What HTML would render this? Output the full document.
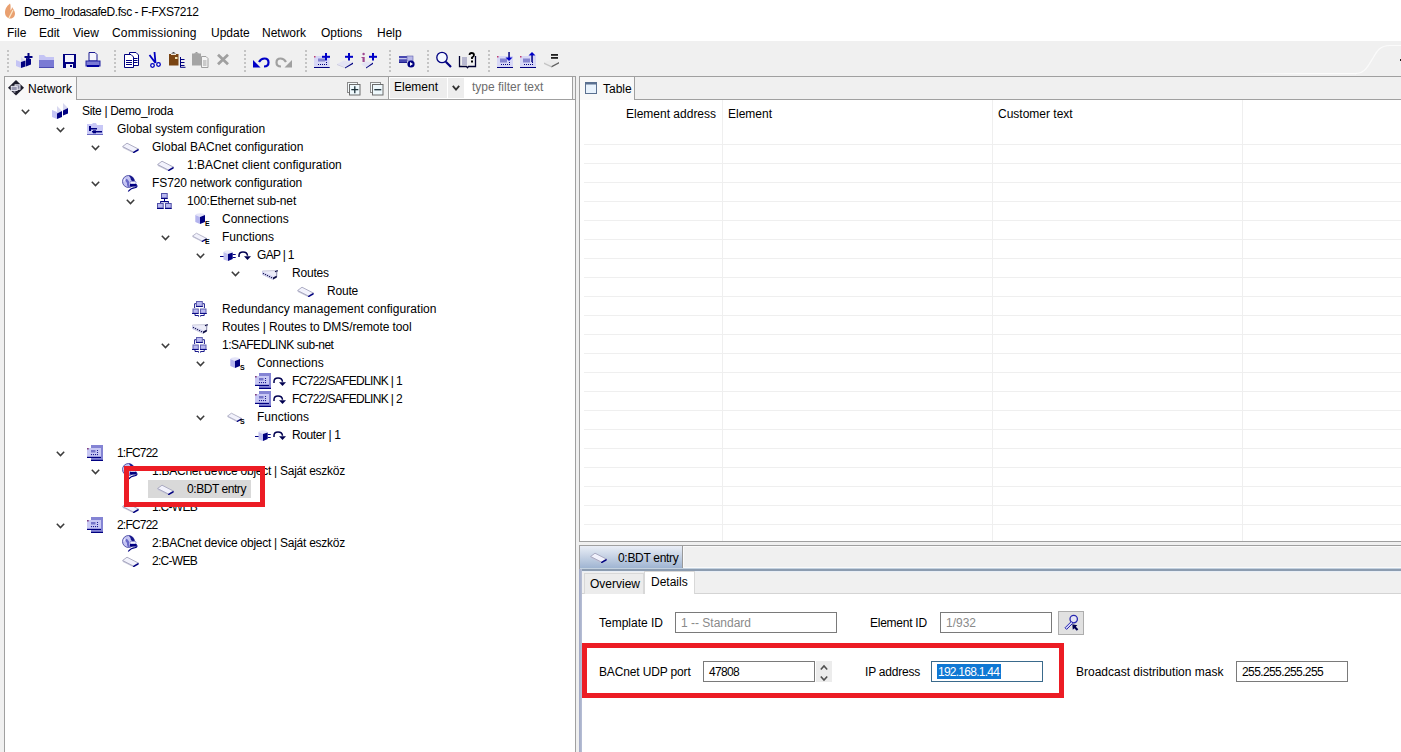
<!DOCTYPE html>
<html><head><meta charset="utf-8">
<style>
*{margin:0;padding:0;box-sizing:border-box}
html,body{width:1401px;height:752px;overflow:hidden;background:#fff;font-family:"Liberation Sans",sans-serif;font-size:12px;color:#000}
.a{position:absolute}
.t{position:absolute;white-space:nowrap;line-height:18px;height:18px}
svg.i{position:absolute;overflow:visible}
</style></head><body>

<svg width="0" height="0" style="position:absolute">
<defs>
<symbol id="chev" viewBox="0 0 9 6"><path d="M0.8 0.8 L4.5 4.6 L8.2 0.8" fill="none" stroke="#3c3c3c" stroke-width="1.5"/></symbol>
<symbol id="site" viewBox="0 0 18 18">
 <path d="M2 9 L7 11 L7 18 L2 16Z" fill="#c4c4f4"/>
 <path d="M7 5 L12 10 L7 12.5Z" fill="#d8d8f0"/>
 <path d="M7 12.5 L12 10 L12 16 L7 18Z" fill="#000080"/>
 <path d="M13 2 L18 7 L13 9.5Z" fill="#d8d8f0"/>
 <path d="M13 9.5 L18 7 L18 12.5 L13 14.5Z" fill="#000080"/>
</symbol>
<symbol id="folder" viewBox="0 0 16 12">
 <path d="M0 1 L5 1 L6 0 L9 0 L10 2 L16 2 L16 12 L0 12Z" fill="#c8c8f6"/>
 <rect x="0" y="11" width="16" height="1" fill="#6666c0"/>
 <rect x="2" y="3" width="2" height="5" fill="#000080"/>
 <rect x="2" y="5" width="8" height="1.5" fill="#000080"/>
 <rect x="5" y="8" width="10" height="1.5" fill="#000080"/>
 <rect x="6" y="7.3" width="3" height="3" fill="#000080"/>
</symbol>
<symbol id="slab" viewBox="0 0 17 11">
 <path d="M0.6 4.6 L0.9 5.9 L11.5 11.2 L11.5 10Z" fill="#c4c4d8"/>
 <path d="M0.6 4.5 L5 1.2 L16.3 7 L11.5 10.1 Z" fill="#f2f2fc" stroke="#a4a4bc" stroke-width="0.9"/>
 <path d="M11 10.1 L16.6 6.8 L16.6 8.6 L11.3 11.5Z" fill="#000080"/>
</symbol>
<symbol id="globe" viewBox="0 0 17 18">
 <circle cx="6.5" cy="6.5" r="6" fill="#c4c4f2" stroke="#4a4aa0" stroke-width="0.9"/>
 <path d="M6.5 0.5 A6 6 0 0 1 12.5 6.5 L10.5 6.5 Q8.5 5 8.5 3 Q8 1.5 6.5 0.5Z" fill="#16168c"/>
 <path d="M3.5 3.5 Q6 4 7 6.5 Q6.5 9 8 11.5 L6 12.3 Q4.5 10 5 8 Q3 6.5 3.5 3.5Z" fill="#6a6ac8"/>
 <path d="M1.5 5 Q2.5 3 4 3.5 Q3 5 2 7Z" fill="#eeeeff"/>
 <rect x="8" y="6.3" width="6" height="2.8" rx="1.2" fill="#f4f4ff" stroke="#5050b0" stroke-width="0.6"/>
 <rect x="8" y="9" width="6.5" height="2.6" fill="#000080"/>
 <path d="M14.3 9.5 Q16.2 12 13 12.6 Q9 13 6.2 16.5" fill="none" stroke="#000080" stroke-width="1.1"/>
</symbol>
<symbol id="nettree" viewBox="0 0 15 16">
 <rect x="4.5" y="0.5" width="5.7" height="4.5" fill="#b8b8f0" stroke="#5050a8" stroke-width="1"/>
 <rect x="4" y="5" width="6.7" height="1" fill="#000080"/>
 <rect x="7" y="6" width="1" height="2.5" fill="#000080"/>
 <rect x="3.2" y="8" width="8.6" height="1.2" fill="#000080"/>
 <rect x="3.2" y="9" width="0.9" height="1.2" fill="#000080"/>
 <rect x="10.9" y="9" width="0.9" height="1.2" fill="#000080"/>
 <rect x="0.5" y="10.5" width="5.7" height="4.5" fill="#b8b8f0" stroke="#5050a8" stroke-width="1"/>
 <rect x="8.5" y="10.5" width="5.7" height="4.5" fill="#b8b8f0" stroke="#5050a8" stroke-width="1"/>
 <rect x="0" y="15" width="6.7" height="1" fill="#000080"/>
 <rect x="8" y="15" width="6.7" height="1" fill="#000080"/>
</symbol>
<symbol id="cube" viewBox="0 0 11 11">
 <path d="M0.3 2 Q1 0.3 5 0.3 Q9.5 0.3 10 2 L5 4 Z" fill="#e4e4f8"/>
 <path d="M0.3 2 L5 4 L5 11 L0.3 9Z" fill="#b4b4ee"/>
 <path d="M5 4 L10 2 L10 9 L5 11Z" fill="#000080"/>
</symbol>
<symbol id="redund" viewBox="0 0 17 17">
 <rect x="6.5" y="1.5" width="5.8" height="4.8" fill="#b8b8f0" stroke="#6060b0" stroke-width="1"/>
 <rect x="6" y="6" width="6.8" height="0.9" fill="#000080"/>
 <path d="M6 3.7 L4.6 3.7 L4.6 8 M12.8 3.7 L14.4 3.7 L14.4 8" fill="none" stroke="#000080" stroke-width="0.9"/>
 <rect x="3" y="9" width="5.3" height="4.3" fill="#b8b8f0" stroke="#6060b0" stroke-width="1"/>
 <rect x="10.5" y="9" width="5.5" height="4.3" fill="#b8b8f0" stroke="#6060b0" stroke-width="1"/>
 <rect x="2" y="13" width="6.6" height="0.9" fill="#000080"/>
 <rect x="10" y="13" width="6.8" height="0.9" fill="#000080"/>
 <path d="M5 13.8 L5 15.5 L8.5 15.5 L8.5 16.6 M14.2 13.8 L14.2 15.5 L10.6 15.5 L10.6 16.6" fill="none" stroke="#000080" stroke-width="0.9"/>
</symbol>
<symbol id="routes" viewBox="0 0 16 10">
 <path d="M0.4 1 L15.3 0.5 L14.8 7 L11 9.5 L0.4 4.5Z" fill="#ececf8" stroke="#c0c0d4" stroke-width="0.8"/>
 <path d="M0 1.5 L11 6.3 L11 9.6 L0 4.5Z" fill="#d0d0f0"/>
 <circle cx="1.5" cy="3.6" r="0.7" fill="#0a0a40"/><circle cx="3.5" cy="4.6" r="0.7" fill="#0a0a40"/><circle cx="5.5" cy="5.6" r="0.7" fill="#0a0a40"/><circle cx="7.5" cy="6.6" r="0.7" fill="#0a0a40"/><circle cx="9.5" cy="7.6" r="0.7" fill="#0a0a40"/>
 <path d="M11 7.6 L14.8 5.6 L14.8 7.6 L11 9.6Z" fill="#0a0a40"/>
 <path d="M12.8 1.3 L15.8 0 L15.6 1.5 L13.2 2.2Z" fill="#0a0a40"/>
 <rect x="14.2" y="1.5" width="0.8" height="4.5" fill="#9090b0"/>
</symbol>
<symbol id="panel" viewBox="0 0 16 16">
 <rect x="4" y="0" width="12" height="15" fill="#8484d4"/>
 <rect x="4" y="14.8" width="12" height="1.2" fill="#000080"/>
 <rect x="0" y="3" width="14" height="9" fill="#c8c8f4"/>
 <rect x="0" y="11.8" width="14" height="1.2" fill="#000080"/>
 <rect x="0" y="3" width="1.7" height="1.5" fill="#804080"/>
 <rect x="4" y="5" width="4.5" height="2.5" fill="#7474c8"/>
 <circle cx="10.5" cy="5.5" r="0.6" fill="#000080"/><circle cx="10.5" cy="7.5" r="0.6" fill="#000080"/>
 <circle cx="4.5" cy="9.6" r="0.6" fill="#000080"/><circle cx="6.5" cy="9.6" r="0.6" fill="#000080"/><circle cx="8.5" cy="9.6" r="0.6" fill="#000080"/><circle cx="10.5" cy="9.6" r="0.6" fill="#000080"/>
</symbol>
<symbol id="arrow" viewBox="0 0 13 9">
 <path d="M1 6 L1 4.5 Q1 1 5 1 Q9.2 1 9.5 4.8" fill="none" stroke="#000050" stroke-width="1.5"/>
 <path d="M6 5.2 L13 5.2 L9.5 9Z" fill="#000050"/>
</symbol>
<symbol id="plug" viewBox="0 0 18 18">
 <rect x="2" y="10" width="5" height="1" fill="#000080"/>
 <path d="M5.5 6 Q6 4.3 10 4.3 Q14 4.3 14.7 6.5 L10 8 Z" fill="#eaeaf8"/>
 <path d="M5.5 6 L10 8 L10 15 L5.5 13.5Z" fill="#c0c0f0"/>
 <path d="M10 8 L14.7 6.5 L14.7 13 L10 15Z" fill="#000080"/>
 <rect x="14.7" y="8" width="3" height="1" fill="#000080"/>
 <rect x="14.7" y="11" width="3" height="1" fill="#000080"/>
</symbol>
<symbol id="netdiamond" viewBox="0 0 16 16">
 <path d="M8 0 L16 7.8 L8 15.6 L0 7.8Z" fill="#1c1c2a"/>
 <rect x="7" y="4.8" width="5" height="4.5" fill="#8888a0" stroke="#f0f0f8" stroke-width="0.9"/>
 <rect x="3.2" y="6.3" width="6" height="4.2" fill="#9898b0" stroke="#f0f0f8" stroke-width="0.9"/>
 <rect x="5.5" y="11.3" width="2" height="1.2" fill="#c0c0d0"/>
</symbol>
</defs></svg>

<div class="a" style="left:0px;top:0px;width:1401px;height:41px;background:#fff"></div>
<svg class="i" style="left:4px;top:3px" width="12" height="16" viewBox="0 0 12 16">
<path d="M6 0.5 C4 2 1 5 1 9.5 C1 13 3.5 15.5 6.5 15.5 C9.5 15.5 11 13 11 10.5 C11 8 9 6 8 4 C8 6 7 7 6.5 7.5 C6.5 5 7 2.5 6 0.5Z" fill="#e9a070"/>
<path d="M5 15 L9 7" stroke="#fbe8c8" stroke-width="1.3"/>
</svg>
<div class="t" style="left:24px;top:3px;letter-spacing:-0.44px">Demo_IrodasafeD.fsc - F-FXS7212</div>
<div class="t" style="left:7px;top:24px;">File</div>
<div class="t" style="left:39px;top:24px;">Edit</div>
<div class="t" style="left:73px;top:24px;">View</div>
<div class="t" style="left:112px;top:24px;letter-spacing:0.2px">Commissioning</div>
<div class="t" style="left:211px;top:24px;">Update</div>
<div class="t" style="left:262px;top:24px;">Network</div>
<div class="t" style="left:321px;top:24px;">Options</div>
<div class="t" style="left:377px;top:24px;">Help</div>
<div class="a" style="left:0px;top:41px;width:1401px;height:711px;background:#f0f0f0"></div>
<div class="a" style="left:7px;top:50px;width:2px;height:2px;background:#c4c4c4"></div>
<div class="a" style="left:7px;top:54px;width:2px;height:2px;background:#c4c4c4"></div>
<div class="a" style="left:7px;top:58px;width:2px;height:2px;background:#c4c4c4"></div>
<div class="a" style="left:7px;top:62px;width:2px;height:2px;background:#c4c4c4"></div>
<div class="a" style="left:7px;top:66px;width:2px;height:2px;background:#c4c4c4"></div>
<div class="a" style="left:7px;top:70px;width:2px;height:2px;background:#c4c4c4"></div>
<div class="a" style="left:114px;top:50px;width:2px;height:2px;background:#c4c4c4"></div>
<div class="a" style="left:114px;top:54px;width:2px;height:2px;background:#c4c4c4"></div>
<div class="a" style="left:114px;top:58px;width:2px;height:2px;background:#c4c4c4"></div>
<div class="a" style="left:114px;top:62px;width:2px;height:2px;background:#c4c4c4"></div>
<div class="a" style="left:114px;top:66px;width:2px;height:2px;background:#c4c4c4"></div>
<div class="a" style="left:114px;top:70px;width:2px;height:2px;background:#c4c4c4"></div>
<div class="a" style="left:244px;top:50px;width:2px;height:2px;background:#c4c4c4"></div>
<div class="a" style="left:244px;top:54px;width:2px;height:2px;background:#c4c4c4"></div>
<div class="a" style="left:244px;top:58px;width:2px;height:2px;background:#c4c4c4"></div>
<div class="a" style="left:244px;top:62px;width:2px;height:2px;background:#c4c4c4"></div>
<div class="a" style="left:244px;top:66px;width:2px;height:2px;background:#c4c4c4"></div>
<div class="a" style="left:244px;top:70px;width:2px;height:2px;background:#c4c4c4"></div>
<div class="a" style="left:305px;top:50px;width:2px;height:2px;background:#c4c4c4"></div>
<div class="a" style="left:305px;top:54px;width:2px;height:2px;background:#c4c4c4"></div>
<div class="a" style="left:305px;top:58px;width:2px;height:2px;background:#c4c4c4"></div>
<div class="a" style="left:305px;top:62px;width:2px;height:2px;background:#c4c4c4"></div>
<div class="a" style="left:305px;top:66px;width:2px;height:2px;background:#c4c4c4"></div>
<div class="a" style="left:305px;top:70px;width:2px;height:2px;background:#c4c4c4"></div>
<div class="a" style="left:389px;top:50px;width:2px;height:2px;background:#c4c4c4"></div>
<div class="a" style="left:389px;top:54px;width:2px;height:2px;background:#c4c4c4"></div>
<div class="a" style="left:389px;top:58px;width:2px;height:2px;background:#c4c4c4"></div>
<div class="a" style="left:389px;top:62px;width:2px;height:2px;background:#c4c4c4"></div>
<div class="a" style="left:389px;top:66px;width:2px;height:2px;background:#c4c4c4"></div>
<div class="a" style="left:389px;top:70px;width:2px;height:2px;background:#c4c4c4"></div>
<div class="a" style="left:427px;top:50px;width:2px;height:2px;background:#c4c4c4"></div>
<div class="a" style="left:427px;top:54px;width:2px;height:2px;background:#c4c4c4"></div>
<div class="a" style="left:427px;top:58px;width:2px;height:2px;background:#c4c4c4"></div>
<div class="a" style="left:427px;top:62px;width:2px;height:2px;background:#c4c4c4"></div>
<div class="a" style="left:427px;top:66px;width:2px;height:2px;background:#c4c4c4"></div>
<div class="a" style="left:427px;top:70px;width:2px;height:2px;background:#c4c4c4"></div>
<div class="a" style="left:488px;top:50px;width:2px;height:2px;background:#c4c4c4"></div>
<div class="a" style="left:488px;top:54px;width:2px;height:2px;background:#c4c4c4"></div>
<div class="a" style="left:488px;top:58px;width:2px;height:2px;background:#c4c4c4"></div>
<div class="a" style="left:488px;top:62px;width:2px;height:2px;background:#c4c4c4"></div>
<div class="a" style="left:488px;top:66px;width:2px;height:2px;background:#c4c4c4"></div>
<div class="a" style="left:488px;top:70px;width:2px;height:2px;background:#c4c4c4"></div>
<svg class="i" style="left:14px;top:50px" width="20" height="20" viewBox="0 0 20 20"><path d="M2 10 L7 12 L7 18 L2 16Z" fill="#c4c4f4"/><path d="M7 7 L11 10.5 L7 12Z" fill="#d8d8f0"/><path d="M7 12 L11.5 10.5 L11.5 16.5 L7 18Z" fill="#000080"/><path d="M12 8 L17 9 L17 14.5 L12 16.5Z" fill="#000080"/><rect x="13.5" y="3" width="2" height="8" fill="#000080"/><rect x="10.5" y="6" width="8" height="2" fill="#000080"/></svg>
<svg class="i" style="left:39px;top:55px" width="15" height="13" viewBox="0 0 15 13"><path d="M0 0 L5 0 L7 2 L15 2 L15 13 L0 13Z" fill="#c4c4f4"/><rect x="0" y="5" width="15" height="8" fill="#7a7ad4"/><rect x="0" y="12" width="15" height="1" fill="#4a4ab0"/></svg>
<svg class="i" style="left:63px;top:54px" width="13" height="14" viewBox="0 0 13 14"><rect x="0" y="0" width="13" height="14" fill="#000080"/><rect x="2" y="1" width="9" height="7" fill="#f4f4fc"/><rect x="3" y="10" width="7" height="4" fill="#f4f4fc"/><rect x="7" y="11" width="2" height="2" fill="#000080"/></svg>
<svg class="i" style="left:86px;top:52px" width="14" height="16" viewBox="0 0 14 16"><path d="M3 0.5 L9 0.5 L11 2.5 L11 9 L3 9Z" fill="#f4f4fc" stroke="#1a1a90" stroke-width="1"/><rect x="0" y="9" width="14" height="5" fill="#7a7ad4" stroke="#2020a0" stroke-width="1"/><rect x="1" y="13" width="12" height="2" fill="#0000a0"/></svg>
<svg class="i" style="left:120px;top:48px" width="20" height="22" viewBox="0 0 20 22"><path d="M9.5 4.5 L16 4.5 L18.5 7 L18.5 17.5 L9.5 17.5Z" fill="#fff" stroke="#000080" stroke-width="1"/><path d="M4.5 6.5 L11 6.5 L13.5 9 L13.5 19.5 L4.5 19.5Z" fill="#fff" stroke="#000080" stroke-width="1"/><path d="M6 12.5 h6 M6 14.5 h6 M6 16.5 h6 M14 10.5 h3.5 M14 12.5 h3.5 M14 14.5 h3.5" stroke="#000080" stroke-width="1"/></svg>
<svg class="i" style="left:140px;top:48px" width="20" height="22" viewBox="0 0 20 22"><path d="M9.5 7 L15.5 15 M14.5 4 L15.5 15" stroke="#0000c0" stroke-width="1.8"/><circle cx="12.5" cy="17.5" r="1.8" fill="#fff" stroke="#0000c0" stroke-width="1.3"/><circle cx="18.5" cy="16.5" r="1.8" fill="#fff" stroke="#0000c0" stroke-width="1.3"/></svg>
<svg class="i" style="left:160px;top:48px" width="20" height="22" viewBox="0 0 20 22"><rect x="9" y="6" width="9.5" height="11.5" fill="#7a4412"/><path d="M11 5.5 L16 5.5 L13.5 4 Z" fill="#303030"/><rect x="11" y="6" width="5" height="1" fill="#f4e8d8"/><rect x="15" y="9" width="2.5" height="2" fill="#f0e0b0"/><rect x="0" y="0" width="0" height="0"/></svg>
<svg class="i" style="left:180px;top:48px" width="8" height="22" viewBox="0 0 8 22"><path d="M0.5 9 L0.5 19.5 M0.5 11.5 h4 M0.5 14.5 h4 M0.5 17.5 h4 M0.5 19.3 h5" stroke="#000080" stroke-width="1"/></svg>
<svg class="i" style="left:188px;top:48px" width="22" height="22" viewBox="0 0 22 22"><rect x="4" y="5.5" width="9" height="12" fill="#a4a4a4"/><path d="M6 5.5 L11 5.5 L8.5 4Z" fill="#8a8a8a"/><path d="M13.5 8.5 L18 8.5 L20 10.5 L20 19.5 L13.5 19.5Z" fill="#f4f4f4" stroke="#a0a0a0" stroke-width="1"/><path d="M15 13 h3.5 M15 15 h3.5 M15 17 h3.5" stroke="#a0a0a0" stroke-width="1"/></svg>
<svg class="i" style="left:216px;top:53px" width="14" height="13" viewBox="0 0 14 13"><path d="M2 1.8 L12 11.2 M12 1.8 L2 11.2" stroke="#a0a0a0" stroke-width="2.8"/></svg>
<svg class="i" style="left:251px;top:56px" width="20" height="13" viewBox="0 0 20 13"><path d="M8 6 Q10 2.5 13.5 2.5 Q17.5 2.5 17.5 6.5 Q17.5 10.5 13 10.5" fill="none" stroke="#0000c8" stroke-width="2.2"/><path d="M2 4 L2 11.5 L9.5 11.5Z" fill="#0000c8"/></svg>
<svg class="i" style="left:274px;top:56px" width="20" height="13" viewBox="0 0 20 13"><path d="M12 6 Q10 2.5 6.5 2.5 Q2.5 2.5 2.5 6.5 Q2.5 10.5 7 10.5" fill="none" stroke="#a0a0a0" stroke-width="2.2"/><path d="M18 4 L18 11.5 L10.5 11.5Z" fill="#a0a0a0"/></svg>
<svg class="i" style="left:310px;top:48px" width="22" height="22" viewBox="0 0 22 22"><rect x="4" y="8" width="15.5" height="11" fill="#d8d8f6"/><rect x="8" y="10.5" width="7" height="3" fill="#8484d0"/><path d="M8 16.5 h1 M10 16.5 h1 M12 16.5 h1 M14 16.5 h1 M16 16.5 h1 M16.5 14 v1" stroke="#000080" stroke-width="1"/><rect x="4" y="19" width="15.7" height="1" fill="#000080"/><rect x="4" y="8" width="1.5" height="1.5" fill="#c04070"/><rect x="15" y="5" width="2" height="7.5" fill="#0000c8"/><rect x="12" y="7.8" width="8" height="2" fill="#0000c8"/></svg>
<svg class="i" style="left:333px;top:48px" width="22" height="22" viewBox="0 0 22 22"><path d="M4 16 L11 12.5 L20 14.5 L12 19.5Z" fill="#e4e4f4"/><path d="M4 16 L12 19.5 L12 20 L4 17Z" fill="#c8c8dc"/><path d="M12 19.5 L20 14.5 L20 16 L12 20.5Z" fill="#000080"/><rect x="15" y="5" width="2" height="7.5" fill="#0000c8"/><rect x="12" y="7.8" width="8" height="2" fill="#0000c8"/></svg>
<svg class="i" style="left:357px;top:48px" width="22" height="22" viewBox="0 0 22 22"><path d="M4 16 L9 13.5 L16 14.5 L9 19.5Z" fill="#e4e4f4"/><path d="M9 19.5 L16 14.5 L16 16 L9 20.5Z" fill="#000080"/><rect x="5.5" y="9" width="2.2" height="5" fill="#a04890"/><circle cx="6.6" cy="6" r="1.2" fill="#a04890"/><rect x="4.5" y="9" width="2" height="1" fill="#a04890"/><rect x="15" y="5" width="2" height="7.5" fill="#0000c8"/><rect x="12" y="7.8" width="8" height="2" fill="#0000c8"/></svg>
<svg class="i" style="left:397px;top:48px" width="20" height="22" viewBox="0 0 20 22"><rect x="2" y="8" width="8" height="6.5" fill="#4848b0"/><rect x="2" y="10" width="8" height="1.3" fill="#c8c8f0"/><rect x="10" y="8" width="6" height="5" fill="#b8b8e8" stroke="#6060b0" stroke-width="0.6"/><circle cx="14" cy="16" r="3.6" fill="#000080"/><path d="M13 14 L16 16 L13 18Z" fill="#fff"/><rect x="2" y="14" width="8" height="0.8" fill="#000080"/></svg>
<svg class="i" style="left:430px;top:48px" width="22" height="22" viewBox="0 0 22 22"><circle cx="12" cy="9.5" r="5.2" fill="#f4f8ff" stroke="#000080" stroke-width="1.3"/><path d="M15.8 13.8 L21 19" stroke="#000080" stroke-width="2.2"/></svg>
<svg class="i" style="left:457px;top:48px" width="20" height="22" viewBox="0 0 20 22"><path d="M2.5 8 L2.5 18.5 L9.5 18.5 L10.5 19.8 L11.5 18.5 L18.5 18.5 L18.5 8" fill="none" stroke="#000030" stroke-width="1.3"/><path d="M5 10 h5 M5 12 h5 M5 14 h5 M5 16 h5" stroke="#8080b0" stroke-width="1"/><path d="M12.5 7 Q12.5 5 14.5 5 Q17 5 17 7 Q17 8.5 15 9.5 L15 11" fill="none" stroke="#000000" stroke-width="1.8"/><rect x="14" y="12.5" width="2" height="2" fill="#000"/></svg>
<svg class="i" style="left:493px;top:48px" width="22" height="22" viewBox="0 0 22 22"><rect x="4" y="8" width="16" height="11" fill="#d8d8f6"/><rect x="7" y="10.5" width="7" height="4" fill="#8484d0"/><path d="M8 16.5 h1 M10 16.5 h1 M12 16.5 h1 M14 16.5 h1 M16 16.5 h1 M16.5 14 v1" stroke="#000080" stroke-width="1"/><rect x="4" y="19" width="16" height="1" fill="#000080"/><rect x="4" y="8" width="1.5" height="1.5" fill="#c04070"/><rect x="15.3" y="4" width="1.5" height="6" fill="#000080"/><path d="M12.5 9.5 L19.5 9.5 L16 13Z" fill="#0000c8"/></svg>
<svg class="i" style="left:516px;top:48px" width="22" height="22" viewBox="0 0 22 22"><rect x="4" y="8" width="16" height="11" fill="#d8d8f6"/><rect x="7" y="10.5" width="7" height="4" fill="#8484d0"/><path d="M8 16.5 h1 M10 16.5 h1 M12 16.5 h1 M14 16.5 h1 M16 16.5 h1 M16.5 14 v1" stroke="#000080" stroke-width="1"/><rect x="4" y="19" width="16" height="1" fill="#000080"/><rect x="4" y="8" width="1.5" height="1.5" fill="#c04070"/><rect x="15.3" y="7" width="1.5" height="7" fill="#000080"/><path d="M12.5 7.5 L19.5 7.5 L16 4Z" fill="#0000c8"/></svg>
<svg class="i" style="left:540px;top:48px" width="22" height="22" viewBox="0 0 22 22"><path d="M4 14.5 L12 11.5 L19 14 L11.5 18Z" fill="#ececec"/><path d="M4 14.5 L11.5 18 L11.5 19.5 L4 16Z" fill="#c4c4c4"/><path d="M11.5 18 L19 14 L19 15.5 L11.5 19.5Z" fill="#606060"/><rect x="11" y="6" width="7" height="1.8" fill="#202020"/><rect x="11" y="9" width="7" height="1.8" fill="#202020"/></svg>
<svg class="i" style="left:1240px;top:44px" width="161" height="32" viewBox="0 0 161 32"><defs><linearGradient id="fl" x1="0" x2="1"><stop offset="0" stop-color="#fbfbfb" stop-opacity="0"/><stop offset="0.5" stop-color="#fbfbfb" stop-opacity="1"/></linearGradient></defs><rect x="0" y="29" width="116" height="1.2" fill="url(#fl)"/><path d="M115 29.6 C125 29.6 128 22 133 14 C137 7 140 1.5 150 1.5 L161 1.5" fill="none" stroke="#fbfbfb" stroke-width="1.2"/></svg>
<div class="a" style="left:1400px;top:59px;width:1px;height:2px;background:#202020"></div>
<div class="a" style="left:4px;top:76px;width:572px;height:700px;border:1px solid #a0a0a0;background:#fff"></div>
<div class="a" style="left:5px;top:77px;width:570px;height:23px;background:#f0f0f0;border-bottom:1px solid #a0a0a0"></div>
<div class="a" style="left:4px;top:76px;width:73px;height:24px;background:#f8f8f8;border:1px solid #a0a0a0;border-bottom:none"></div>
<svg class="i" style="left:8px;top:80px" width="16" height="16"><use href="#netdiamond" width="16" height="16"/></svg>
<div class="t" style="left:28px;top:80px;">Network</div>
<svg class="i" style="left:346px;top:81px" width="16" height="16" viewBox="0 0 16 16"><rect x="1.5" y="1.5" width="10" height="10" fill="#f4fafc" stroke="#8c8c8c"/><rect x="3.5" y="3.5" width="10.5" height="10.5" fill="#eef8fc" stroke="#6c6c6c"/><path d="M5.3 8.7 h7 M8.8 5.3 v7" stroke="#1c3038" stroke-width="1.3"/></svg>
<svg class="i" style="left:369px;top:81px" width="16" height="16" viewBox="0 0 16 16"><rect x="1.5" y="1.5" width="10" height="10" fill="#f4fafc" stroke="#8c8c8c"/><rect x="3.5" y="3.5" width="10.5" height="10.5" fill="#eef8fc" stroke="#6c6c6c"/><path d="M5.3 8.7 h7" stroke="#1c3038" stroke-width="1.3"/></svg>
<div class="a" style="left:388px;top:76px;width:185px;height:24px;background:#fff;border:1px solid #a0a0a0"></div>
<div class="a" style="left:390px;top:78px;width:57px;height:20px;background:#ededed"></div>
<div class="a" style="left:448px;top:78px;width:16px;height:20px;background:#ededed"></div>
<div class="t" style="left:394px;top:78px;">Element</div>
<svg class="i" style="left:452px;top:85px" width="8" height="6" viewBox="0 0 8 6"><path d="M0.8 0.8 L4 4.6 L7.2 0.8" fill="none" stroke="#303030" stroke-width="1.8"/></svg>
<div class="t" style="left:472px;top:78px;color:#6d6d6d">type filter text</div>
<div class="a" style="left:148px;top:480px;width:103px;height:18px;background:#d9d9d9"></div>
<svg class="i" style="left:21px;top:109px" width="9" height="6"><use href="#chev" width="9" height="6"/></svg>
<svg class="i" style="left:50px;top:101px" width="18" height="18"><use href="#site" width="18" height="18"/></svg>
<div class="t" style="left:82px;top:102px;letter-spacing:-0.32px">Site | Demo_Iroda</div>
<svg class="i" style="left:56px;top:127px" width="9" height="6"><use href="#chev" width="9" height="6"/></svg>
<svg class="i" style="left:87px;top:123px" width="16" height="12"><use href="#folder" width="16" height="12"/></svg>
<div class="t" style="left:117px;top:120px;letter-spacing:0px">Global system configuration</div>
<svg class="i" style="left:91px;top:145px" width="9" height="6"><use href="#chev" width="9" height="6"/></svg>
<svg class="i" style="left:122px;top:142px" width="17" height="11"><use href="#slab" width="17" height="11"/></svg>
<div class="t" style="left:152px;top:138px;letter-spacing:0px">Global BACnet configuration</div>
<svg class="i" style="left:157px;top:160px" width="17" height="11"><use href="#slab" width="17" height="11"/></svg>
<div class="t" style="left:187px;top:156px;letter-spacing:0px">1:BACnet client configuration</div>
<svg class="i" style="left:91px;top:181px" width="9" height="6"><use href="#chev" width="9" height="6"/></svg>
<svg class="i" style="left:122px;top:175px" width="17" height="18"><use href="#globe" width="17" height="18"/></svg>
<div class="t" style="left:152px;top:174px;letter-spacing:-0.1px">FS720 network configuration</div>
<svg class="i" style="left:126px;top:199px" width="9" height="6"><use href="#chev" width="9" height="6"/></svg>
<svg class="i" style="left:157px;top:193px" width="15" height="16"><use href="#nettree" width="15" height="16"/></svg>
<div class="t" style="left:187px;top:192px;letter-spacing:-0.15px">100:Ethernet sub-net</div>
<svg class="i" style="left:195px;top:213px" width="11" height="11"><use href="#cube" width="11" height="11"/></svg>
<div class="t" style="left:205px;top:219px;font-size:7px;font-weight:bold;line-height:9px;height:9px;color:#000">E</div>
<div class="t" style="left:222px;top:210px;letter-spacing:0px">Connections</div>
<svg class="i" style="left:161px;top:235px" width="9" height="6"><use href="#chev" width="9" height="6"/></svg>
<svg class="i" style="left:192px;top:232px" width="15" height="10"><use href="#slab" width="15" height="10"/></svg>
<div class="t" style="left:205px;top:237px;font-size:7px;font-weight:bold;line-height:9px;height:9px;color:#000">E</div>
<div class="t" style="left:222px;top:228px;letter-spacing:0px">Functions</div>
<svg class="i" style="left:196px;top:253px" width="9" height="6"><use href="#chev" width="9" height="6"/></svg>
<svg class="i" style="left:218px;top:246px" width="18" height="18"><use href="#plug" width="18" height="18"/></svg>
<svg class="i" style="left:238px;top:251px" width="13" height="9"><use href="#arrow" width="13" height="9"/></svg>
<div class="t" style="left:257px;top:246px;letter-spacing:-0.7px">GAP | 1</div>
<svg class="i" style="left:231px;top:271px" width="9" height="6"><use href="#chev" width="9" height="6"/></svg>
<svg class="i" style="left:262px;top:270px" width="16" height="10"><use href="#routes" width="16" height="10"/></svg>
<div class="t" style="left:292px;top:264px;letter-spacing:-0.2px">Routes</div>
<svg class="i" style="left:297px;top:286px" width="17" height="11"><use href="#slab" width="17" height="11"/></svg>
<div class="t" style="left:327px;top:282px;letter-spacing:-0.2px">Route</div>
<svg class="i" style="left:190px;top:300px" width="17" height="17"><use href="#redund" width="17" height="17"/></svg>
<div class="t" style="left:222px;top:300px;letter-spacing:0.05px">Redundancy management configuration</div>
<svg class="i" style="left:192px;top:324px" width="16" height="10"><use href="#routes" width="16" height="10"/></svg>
<div class="t" style="left:222px;top:318px;letter-spacing:-0.09px">Routes | Routes to DMS/remote tool</div>
<svg class="i" style="left:161px;top:343px" width="9" height="6"><use href="#chev" width="9" height="6"/></svg>
<svg class="i" style="left:190px;top:336px" width="17" height="17"><use href="#redund" width="17" height="17"/></svg>
<div class="t" style="left:222px;top:336px;letter-spacing:-0.45px">1:SAFEDLINK sub-net</div>
<svg class="i" style="left:196px;top:361px" width="9" height="6"><use href="#chev" width="9" height="6"/></svg>
<svg class="i" style="left:230px;top:357px" width="11" height="11"><use href="#cube" width="11" height="11"/></svg>
<div class="t" style="left:240px;top:363px;font-size:7px;font-weight:bold;line-height:9px;height:9px;color:#000">S</div>
<div class="t" style="left:257px;top:354px;letter-spacing:0px">Connections</div>
<svg class="i" style="left:255px;top:373px" width="16" height="16"><use href="#panel" width="16" height="16"/></svg>
<svg class="i" style="left:273px;top:377px" width="13" height="9"><use href="#arrow" width="13" height="9"/></svg>
<div class="t" style="left:292px;top:372px;letter-spacing:-0.66px">FC722/SAFEDLINK | 1</div>
<svg class="i" style="left:255px;top:391px" width="16" height="16"><use href="#panel" width="16" height="16"/></svg>
<svg class="i" style="left:273px;top:395px" width="13" height="9"><use href="#arrow" width="13" height="9"/></svg>
<div class="t" style="left:292px;top:390px;letter-spacing:-0.66px">FC722/SAFEDLINK | 2</div>
<svg class="i" style="left:196px;top:415px" width="9" height="6"><use href="#chev" width="9" height="6"/></svg>
<svg class="i" style="left:227px;top:412px" width="15" height="10"><use href="#slab" width="15" height="10"/></svg>
<div class="t" style="left:240px;top:417px;font-size:7px;font-weight:bold;line-height:9px;height:9px;color:#000">S</div>
<div class="t" style="left:257px;top:408px;letter-spacing:0px">Functions</div>
<svg class="i" style="left:253px;top:426px" width="18" height="18"><use href="#plug" width="18" height="18"/></svg>
<svg class="i" style="left:273px;top:431px" width="13" height="9"><use href="#arrow" width="13" height="9"/></svg>
<div class="t" style="left:292px;top:426px;letter-spacing:-0.4px">Router | 1</div>
<svg class="i" style="left:56px;top:451px" width="9" height="6"><use href="#chev" width="9" height="6"/></svg>
<svg class="i" style="left:87px;top:445px" width="16" height="16"><use href="#panel" width="16" height="16"/></svg>
<div class="t" style="left:117px;top:444px;letter-spacing:-0.8px">1:FC722</div>
<svg class="i" style="left:91px;top:469px" width="9" height="6"><use href="#chev" width="9" height="6"/></svg>
<svg class="i" style="left:122px;top:463px" width="17" height="18"><use href="#globe" width="17" height="18"/></svg>
<div class="t" style="left:152px;top:462px;letter-spacing:-0.26px">1:BACnet device object | Saj&aacute;t eszk&ouml;z</div>
<svg class="i" style="left:157px;top:484px" width="17" height="11"><use href="#slab" width="17" height="11"/></svg>
<div class="t" style="left:187px;top:480px;letter-spacing:-0.44px">0:BDT entry</div>
<svg class="i" style="left:122px;top:502px" width="17" height="11"><use href="#slab" width="17" height="11"/></svg>
<div class="t" style="left:152px;top:498px;letter-spacing:-0.7px">1:C-WEB</div>
<svg class="i" style="left:56px;top:523px" width="9" height="6"><use href="#chev" width="9" height="6"/></svg>
<svg class="i" style="left:87px;top:517px" width="16" height="16"><use href="#panel" width="16" height="16"/></svg>
<div class="t" style="left:117px;top:516px;letter-spacing:-0.8px">2:FC722</div>
<svg class="i" style="left:122px;top:535px" width="17" height="18"><use href="#globe" width="17" height="18"/></svg>
<div class="t" style="left:152px;top:534px;letter-spacing:-0.26px">2:BACnet device object | Saj&aacute;t eszk&ouml;z</div>
<svg class="i" style="left:122px;top:556px" width="17" height="11"><use href="#slab" width="17" height="11"/></svg>
<div class="t" style="left:152px;top:552px;letter-spacing:-0.7px">2:C-WEB</div>
<div class="a" style="left:124px;top:466px;width:141px;height:41px;border:5px solid #ec1c24"></div>
<div class="a" style="left:579px;top:76px;width:830px;height:466px;border:1px solid #a0a0a0;background:#fff"></div>
<div class="a" style="left:580px;top:77px;width:830px;height:23px;background:#f0f0f0;border-bottom:1px solid #a0a0a0"></div>
<div class="a" style="left:579px;top:76px;width:56px;height:24px;background:#f8f8f8;border:1px solid #a0a0a0;border-bottom:none"></div>
<svg class="i" style="left:585px;top:82px" width="12" height="12" viewBox="0 0 12 12"><rect x="0.5" y="0.5" width="11" height="11" fill="#e8f2fc" stroke="#5a7090"/><rect x="0.5" y="0.5" width="11" height="2" fill="#5a7090"/></svg>
<div class="t" style="left:603px;top:80px;">Table</div>
<div class="a" style="left:584px;top:144px;width:817px;height:1px;background:#efefef"></div>
<div class="a" style="left:584px;top:163px;width:817px;height:1px;background:#efefef"></div>
<div class="a" style="left:584px;top:182px;width:817px;height:1px;background:#efefef"></div>
<div class="a" style="left:584px;top:201px;width:817px;height:1px;background:#efefef"></div>
<div class="a" style="left:584px;top:220px;width:817px;height:1px;background:#efefef"></div>
<div class="a" style="left:584px;top:239px;width:817px;height:1px;background:#efefef"></div>
<div class="a" style="left:584px;top:258px;width:817px;height:1px;background:#efefef"></div>
<div class="a" style="left:584px;top:277px;width:817px;height:1px;background:#efefef"></div>
<div class="a" style="left:584px;top:296px;width:817px;height:1px;background:#efefef"></div>
<div class="a" style="left:584px;top:315px;width:817px;height:1px;background:#efefef"></div>
<div class="a" style="left:584px;top:334px;width:817px;height:1px;background:#efefef"></div>
<div class="a" style="left:584px;top:353px;width:817px;height:1px;background:#efefef"></div>
<div class="a" style="left:584px;top:372px;width:817px;height:1px;background:#efefef"></div>
<div class="a" style="left:584px;top:391px;width:817px;height:1px;background:#efefef"></div>
<div class="a" style="left:584px;top:410px;width:817px;height:1px;background:#efefef"></div>
<div class="a" style="left:584px;top:429px;width:817px;height:1px;background:#efefef"></div>
<div class="a" style="left:584px;top:448px;width:817px;height:1px;background:#efefef"></div>
<div class="a" style="left:584px;top:467px;width:817px;height:1px;background:#efefef"></div>
<div class="a" style="left:584px;top:486px;width:817px;height:1px;background:#efefef"></div>
<div class="a" style="left:584px;top:505px;width:817px;height:1px;background:#efefef"></div>
<div class="a" style="left:584px;top:524px;width:817px;height:1px;background:#efefef"></div>
<div class="a" style="left:722px;top:100px;width:1px;height:441px;background:#efefef"></div>
<div class="a" style="left:992px;top:100px;width:1px;height:441px;background:#efefef"></div>
<div class="a" style="left:1242px;top:100px;width:1px;height:441px;background:#efefef"></div>
<div class="t" style="left:626px;top:105px;">Element address</div>
<div class="t" style="left:728px;top:105px;">Element</div>
<div class="t" style="left:998px;top:105px;">Customer text</div>
<div class="a" style="left:579px;top:545px;width:830px;height:210px;border:1px solid #a0a0a0;background:#fff"></div>
<div class="a" style="left:580px;top:546px;width:830px;height:22px;background:#f0f0f0"></div>
<div class="a" style="left:580px;top:546px;width:102px;height:23px;background:linear-gradient(#eaeef6,#9cb2d0)"></div>
<div class="a" style="left:682px;top:546px;width:1px;height:22px;background:#9a9a9a"></div>
<div class="a" style="left:683px;top:546px;width:718px;height:22px;background:#f0f0f0;border-left:1px solid #fafafa;border-bottom:1px solid #fafafa;border-top:1px solid #fafafa"></div>
<div class="a" style="left:580px;top:568px;width:830px;height:1px;background:#c4d2e0"></div>
<div class="a" style="left:580px;top:569px;width:830px;height:2px;background:#8c9cb0"></div>
<div class="a" style="left:582px;top:571px;width:830px;height:1px;background:#e8eef6"></div>
<div class="a" style="left:579px;top:569px;width:3px;height:190px;background:linear-gradient(90deg,#a0a8c4,#b8c0d6)"></div>
<div class="a" style="left:582px;top:572px;width:819px;height:22px;background:#f0f0f0;border-bottom:1px solid #d4d4d4"></div>
<div class="a" style="left:584px;top:573px;width:60px;height:21px;background:#ececec;border:1px solid #d8d8d8;border-bottom:none"></div>
<div class="a" style="left:644px;top:571px;width:51px;height:23px;background:#fff;border:1px solid #d8d8d8;border-bottom:none"></div>
<svg class="i" style="left:590px;top:552px" width="17" height="11"><use href="#slab" width="17" height="11"/></svg>
<div class="t" style="left:618px;top:549px;letter-spacing:-0.3px">0:BDT entry</div>
<div class="t" style="left:590px;top:575px;">Overview</div>
<div class="t" style="left:651px;top:573px;">Details</div>
<div class="t" style="left:599px;top:614px;">Template ID</div>
<div class="a" style="left:675px;top:612px;width:162px;height:21px;border:1px solid #7a7a7a;background:#fff"></div>
<div class="t" style="left:681px;top:614px;color:#8a8a8a">1 -- Standard</div>
<div class="t" style="left:870px;top:614px;letter-spacing:-0.25px">Element ID</div>
<div class="a" style="left:940px;top:612px;width:112px;height:21px;border:1px solid #7a7a7a;background:#fff"></div>
<div class="t" style="left:946px;top:614px;color:#8a8a8a">1/932</div>
<div class="a" style="left:1058px;top:611px;width:26px;height:24px;border:1px solid #adadad;background:#e1e1e1"></div>
<svg class="i" style="left:1058px;top:611px" width="26" height="24" viewBox="0 0 26 24"><circle cx="15.7" cy="8.1" r="3.7" fill="#e4e4f4" stroke="#2828b0" stroke-width="1.3"/><path d="M13 10.8 L7 16.8 L8.6 18.4 L14.6 12.4" fill="#d0d0f8" stroke="#2828b0" stroke-width="1"/><path d="M14.3 13.3 L19.3 14.3 L17.8 15.8 L20.3 18.3 L18.8 19.8 L16.3 17.3 L14.8 18.8 Z" fill="#000050"/></svg>
<div class="t" style="left:599px;top:663px;letter-spacing:-0.15px">BACnet UDP port</div>
<div class="a" style="left:703px;top:661px;width:112px;height:21px;border:1px solid #7a7a7a;background:#fff"></div>
<div class="t" style="left:709px;top:663px;letter-spacing:-0.65px">47808</div>
<div class="a" style="left:816px;top:661px;width:16px;height:21px;background:#ececec"></div>
<svg class="i" style="left:819px;top:663px" width="10" height="19" viewBox="0 0 10 19"><path d="M1.8 6.5 L5 3 L8.2 6.5 M1.8 13.5 L5 17 L8.2 13.5" fill="none" stroke="#505050" stroke-width="1.6"/></svg>
<div class="t" style="left:865px;top:663px;letter-spacing:-0.2px">IP address</div>
<div class="a" style="left:931px;top:661px;width:112px;height:21px;border:1px solid #3a6a8c;background:#fff"></div>
<div class="a" style="left:937px;top:664px;width:64px;height:15px;background:#0f78d4"></div>
<div class="t" style="left:938px;top:663px;color:#fff;letter-spacing:-0.75px">192.168.1.44</div>
<div class="t" style="left:1076px;top:663px;">Broadcast distribution mask</div>
<div class="a" style="left:1236px;top:661px;width:112px;height:21px;border:1px solid #7a7a7a;background:#fff"></div>
<div class="t" style="left:1242px;top:663px;letter-spacing:-0.6px">255.255.255.255</div>
<div class="a" style="left:582px;top:643px;width:482px;height:55px;border:5px solid #ec1c24"></div>
</body></html>
